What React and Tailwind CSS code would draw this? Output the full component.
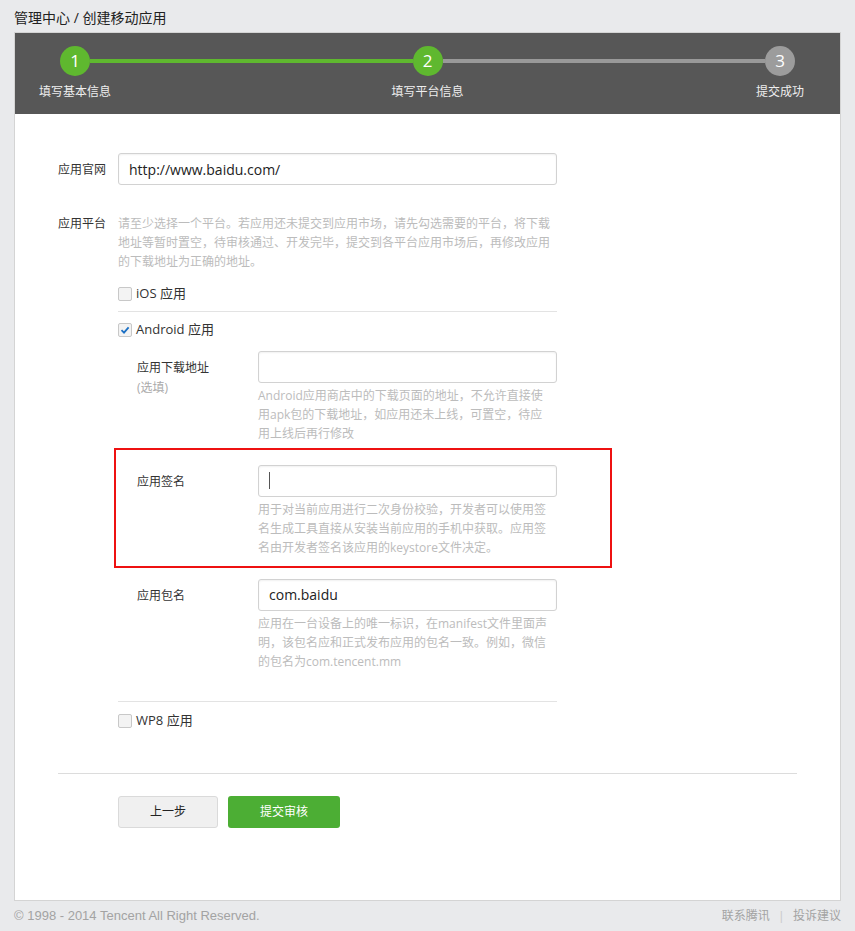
import React from "react";

const FONT = { fontFamily: '"Segoe UI", "Open Sans", "Noto Sans CJK SC", sans-serif' };

function Checkbox({ checked }) {
  return (
    <span className="inline-flex h-[14px] w-[14px] items-center justify-center rounded-[2px] border border-[#c8c8c8] bg-[#f3f3f3]">
      {checked && (
        <svg width="10" height="10" viewBox="0 0 10 10">
          <path d="M1.5 5.2 L4 7.6 L8.6 2.4" fill="none" stroke="#1a6fc4" strokeWidth="1.8" />
        </svg>
      )}
    </span>
  );
}

function Field({ value, cursor, width = "w-[299px]" }) {
  return (
    <div
      className={`relative flex h-[32px] ${width} items-center rounded-[3px] border border-[#d2d2d2] bg-white px-[10px] text-[14px] text-[#222] shadow-[inset_0_1px_2px_rgba(0,0,0,0.06)]`}
    >
      {value}
      {cursor && <span className="h-[17px] w-px bg-[#555]" />}
    </div>
  );
}

function SubRow({ label, sub, value, cursor, desc, children }) {
  return (
    <div className="relative flex">
      {children}
      <div className="w-[121px] shrink-0 pt-[1px] text-[12px] text-[#333]">
        <div className="leading-[32px]">{label}</div>
        {sub && <div className="-mt-[6px] leading-[19px] text-[#aaa]">{sub}</div>}
      </div>
      <div className="w-[299px]">
        <Field value={value} cursor={cursor} />
        <div className="mt-[3.5px] w-[290px] text-[12px] leading-[19px] text-[#bcbcbc]">{desc}</div>
      </div>
    </div>
  );
}

function Step({ n, active }) {
  return (
    <div
      className={`flex h-[30px] w-[30px] shrink-0 items-center justify-center rounded-full text-[17px] text-white ${
        active ? "bg-[#5fb82f]" : "bg-[#9c9c9c]"
      }`}
    >
      {n}
    </div>
  );
}

export default function App() {
  return (
    <div className="min-h-[931px] bg-[#e9eaec] px-[14px]" style={FONT}>
      <div className="flex h-[32px] items-center pt-[2px] text-[14px] text-[#222]">管理中心 / 创建移动应用</div>

      <div className="border border-[#d4d4d4] bg-white">
        {/* steps header */}
        <div className="h-[81px] bg-[#575757] pt-[13px]">
          <div className="flex items-center px-[45px]">
            <Step n="1" active />
            <div className="h-[4px] flex-1 bg-[#5fb82f]" />
            <Step n="2" active />
            <div className="h-[4px] flex-1 bg-[#999]" />
            <Step n="3" />
          </div>
          <div className="mt-[8px] flex justify-between px-[15px] text-[12px] leading-[16px] text-[#eee]">
            <div className="w-[90px] text-center">填写基本信息</div>
            <div className="w-[90px] text-center">填写平台信息</div>
            <div className="w-[90px] text-center">提交成功</div>
          </div>
        </div>

        {/* form */}
        <div className="px-[43px] pt-[39px] pb-[72px]">
          <div className="flex">
            <div className="w-[60px] shrink-0 pt-[1px] text-[12px] leading-[32px] text-[#333]">应用官网</div>
            <Field value="http://www.baidu.com/" width="w-[439px]" />
          </div>

          <div className="mt-[28px] flex">
            <div className="w-[60px] shrink-0 text-[12px] leading-[19px] text-[#333]">应用平台</div>
            <div className="w-[439px]">
              <div className="text-[12px] leading-[19px] text-[#bcbcbc]">
                请至少选择一个平台。若应用还未提交到应用市场，请先勾选需要的平台，将下载地址等暂时置空，待审核通过、开发完毕，提交到各平台应用市场后，再修改应用的下载地址为正确的地址。
              </div>

              <div className="mt-[12.5px] flex h-[20px] items-center gap-[4px] text-[13px] text-[#333]">
                <Checkbox />
                <span>iOS 应用</span>
              </div>
              <div className="mt-[7px] h-px bg-[#e3e3e3]" />
              <div className="mt-[8.5px] flex h-[20px] items-center gap-[4px] text-[13px] text-[#333]">
                <Checkbox checked />
                <span>Android 应用</span>
              </div>

              <div className="pl-[19px]">
                <div className="mt-[10.5px]">
                  <SubRow
                    label="应用下载地址"
                    sub="(选填)"
                    value=""
                    desc="Android应用商店中的下载页面的地址，不允许直接使用apk包的下载地址，如应用还未上线，可置空，待应用上线后再行修改"
                  />
                </div>
                <div className="mt-[21.5px]">
                  <SubRow
                    label="应用签名"
                    value=""
                    cursor
                    desc="用于对当前应用进行二次身份校验，开发者可以使用签名生成工具直接从安装当前应用的手机中获取。应用签名由开发者签名该应用的keystore文件决定。"
                  >
                    <div className="pointer-events-none absolute -left-[23px] -top-[17px] h-[120px] w-[498px] border-2 border-[#ee1111]" />
                  </SubRow>
                </div>
                <div className="mt-[21.5px]">
                  <SubRow
                    label="应用包名"
                    value="com.baidu"
                    desc="应用在一台设备上的唯一标识，在manifest文件里面声明，该包名应和正式发布应用的包名一致。例如，微信的包名为com.tencent.mm"
                  />
                </div>
              </div>

              <div className="mt-[29.5px] h-px bg-[#e3e3e3]" />
              <div className="mt-[9px] flex h-[20px] items-center gap-[4px] text-[13px] text-[#333]">
                <Checkbox />
                <span>WP8 应用</span>
              </div>
            </div>
          </div>

          <div className="mt-[42px] h-px bg-[#dcdcdc]" />

          <div className="mt-[22px] flex gap-[10px] pl-[60px]">
            <button className="h-[32px] w-[100px] rounded-[3px] border border-[#dadada] bg-[#f0f0f0] text-[12px] text-[#222]">
              上一步
            </button>
            <button className="h-[32px] w-[112px] rounded-[3px] bg-[#4cae34] text-[12px] text-white">提交审核</button>
          </div>
        </div>
      </div>

      <div className="flex h-[30px] items-center justify-between text-[12px] text-[#a3a3a3]" style={{ fontFamily: '"Liberation Sans Narrow", "Liberation Sans", "Noto Sans CJK SC", sans-serif' }}>
        <span className="text-[13px]">© 1998 - 2014 Tencent All Right Reserved.</span>
        <span className="flex items-center gap-[10px]">
          <span>联系腾讯</span>
          <span className="text-[#ccc]">|</span>
          <span>投诉建议</span>
        </span>
      </div>
    </div>
  );
}
